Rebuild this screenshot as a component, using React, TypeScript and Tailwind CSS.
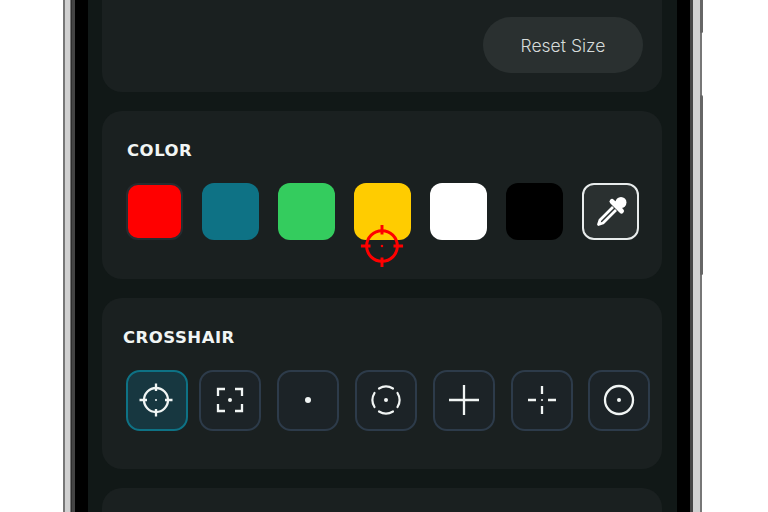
const titleFont = "font-['DejaVu_Sans'] font-bold";

const swatches = ["bg-[#ff0000]", "bg-[#0e7285]", "bg-[#34cc5e]", "bg-[#ffcc00]", "bg-white", "bg-black"];

function Aim({ color = "#f1f5f4", size = 36 }: { color?: string; size?: number }) {
  return (
    <svg width={size} height={size} viewBox="0 0 36 36" fill="none" stroke={color} strokeWidth="2.3">
      <circle cx="18" cy="18" r="12" />
      <path d="M18 1.5V9M18 27v7.5M1.5 18H9M27 18h7.5" />
      <circle cx="18" cy="18" r="1" fill={color} stroke="none" />
    </svg>
  );
}

const icons = [
  <Aim key="aim" />,
  <svg key="frame" width="36" height="36" viewBox="0 0 36 36" fill="none" stroke="#f1f5f4" strokeWidth="2.3">
    <path d="M13 7H6v7M23 7h7v7M13 29H6v-7M23 29h7v-7" />
    <circle cx="18" cy="18" r="2" fill="#f1f5f4" stroke="none" />
  </svg>,
  <svg key="dot" width="36" height="36" viewBox="0 0 36 36">
    <circle cx="18" cy="18" r="3" fill="#f1f5f4" />
  </svg>,
  <svg key="dashed" width="36" height="36" viewBox="0 0 36 36" fill="none" stroke="#f1f5f4" strokeWidth="2.2" strokeLinecap="round">
    <path d="M11 6.5A13.5 13.5 0 0 1 25 6.5M29.5 11A13.5 13.5 0 0 1 29.5 25M25 29.5A13.5 13.5 0 0 1 11 29.5M6.5 25A13.5 13.5 0 0 1 6.5 11" />
    <circle cx="18" cy="18" r="2" fill="#f1f5f4" stroke="none" />
  </svg>,
  <svg key="plus" width="36" height="36" viewBox="0 0 36 36" stroke="#f1f5f4" strokeWidth="2.3">
    <path d="M18 3v30M3 18h30" />
  </svg>,
  <svg key="gap" width="36" height="36" viewBox="0 0 36 36" stroke="#f1f5f4" strokeWidth="2.3" fill="none">
    <path d="M18 4v8M18 24v8M4 18h8M24 18h8" />
    <circle cx="18" cy="18" r="1" fill="#f1f5f4" stroke="none" />
  </svg>,
  <svg key="ring" width="36" height="36" viewBox="0 0 36 36" fill="none" stroke="#f1f5f4" strokeWidth="2.3">
    <circle cx="18" cy="18" r="14" />
    <circle cx="18" cy="18" r="2" fill="#f1f5f4" stroke="none" />
  </svg>,
];

export default function App() {
  return (
    <div className="h-[512px] w-[768px] overflow-hidden bg-white pl-[63px]">
      <div className="relative flex h-[512px] w-[639px]">
        {/* phone frame */}
        <div className="h-full w-[12px] bg-[linear-gradient(90deg,#777_0,#777_2px,#d0d0d0_2px,#d0d0d0_7px,#777_7px,#777_8px,#2e2e2e_8px,#2e2e2e_9px,#444_9px,#444_12px)]" />
        <div className="h-full w-[13px] bg-black" />
        <div className="flex h-full w-[589px] flex-col gap-[19px] bg-[#111817] pl-[14px] pr-[15px]">
          <div className="flex h-[92px] shrink-0 items-start justify-end rounded-b-[20px] bg-[#1a2020] pr-[19px] pt-[17px]">
            <button className="h-[56px] w-[160px] rounded-full bg-[#2a3030] pt-[2px] font-['Inter'] text-[17.5px] font-light text-[#d6dbda]">
              Reset Size
            </button>
          </div>

          <div className="relative h-[168px] shrink-0 rounded-[20px] bg-[#1a2020] pl-[24px] pt-[29px]">
            <h2 className={`${titleFont} ml-[1px] text-[16.5px] leading-[22px] tracking-[0.5px] text-[#f1f5f4]`}>COLOR</h2>
            <div className="mt-[21px] flex gap-[19px]">
              {swatches.map((c, i) => (
                <div
                  key={c}
                  className={`h-[57px] w-[57px] rounded-[12px] ${c} ${i === 0 ? "border-2 border-[#262c30]" : ""}`}
                />
              ))}
              <div className="flex h-[57px] w-[57px] items-center justify-center rounded-[12px] border-2 border-[#e8ecec] bg-[#2a3030]">
                <svg width="40" height="40" viewBox="0 0 40 40" fill="none" stroke="#ffffff">
                  <circle cx="30" cy="10.5" r="5.5" fill="#ffffff" stroke="none" />
                  <path d="M21 9.5l9.5 9.5" strokeWidth="5" strokeLinecap="round" />
                  <path d="M22 15L9 28l-1.5 4.5L12 31l13-13" strokeWidth="2.8" strokeLinejoin="round" />
                  <path d="M23 10l7 7 3-6-4-4z" fill="#ffffff" stroke="none" />
                </svg>
              </div>
            </div>
            <div className="absolute left-[257px] top-[112px]">
              <Aim color="#ff0000" size={46} />
            </div>
          </div>

          <div className="h-[171px] shrink-0 rounded-[20px] bg-[#1a2020] pl-[21px] pt-[29px]">
            <h2 className={`${titleFont} text-[16.5px] leading-[22px] tracking-[0.5px] text-[#f1f5f4]`}>CROSSHAIR</h2>
            <div className="mt-[21px] flex gap-[16px] pl-[2.5px]">
              {icons.map((icon, i) => (
                <div
                  key={i}
                  className={`flex h-[61px] w-[62px] shrink-0 items-center justify-center rounded-[14px] border-2 pb-[1px] pr-[1px] ${
                    i === 0 ? "-mr-[4.5px] border-[#0e7285] bg-[#173740]" : "border-[#2d3b4a] bg-[#1c2327]"
                  } ${i === 5 ? "-mr-[1px]" : ""}`}
                >
                  {icon}
                </div>
              ))}
            </div>
          </div>

          <div className="h-[60px] shrink-0 rounded-[20px] bg-[#1a2020]" />
        </div>
        <div className="h-full w-[13px] bg-black" />
        <div className="h-full w-[12px] bg-[linear-gradient(90deg,#444_0,#444_3px,#d0d0d0_3px,#d0d0d0_10px,#777_10px,#777_12px)]" />
        {/* side buttons */}
        <div className="absolute left-[637px] top-[-4px] h-[37px] w-[3px] rounded-b-[2px] bg-[#666]" />
        <div className="absolute left-[637px] top-[95px] h-[180px] w-[3px] rounded-[2px] bg-[#666]" />
      </div>
    </div>
  );
}
